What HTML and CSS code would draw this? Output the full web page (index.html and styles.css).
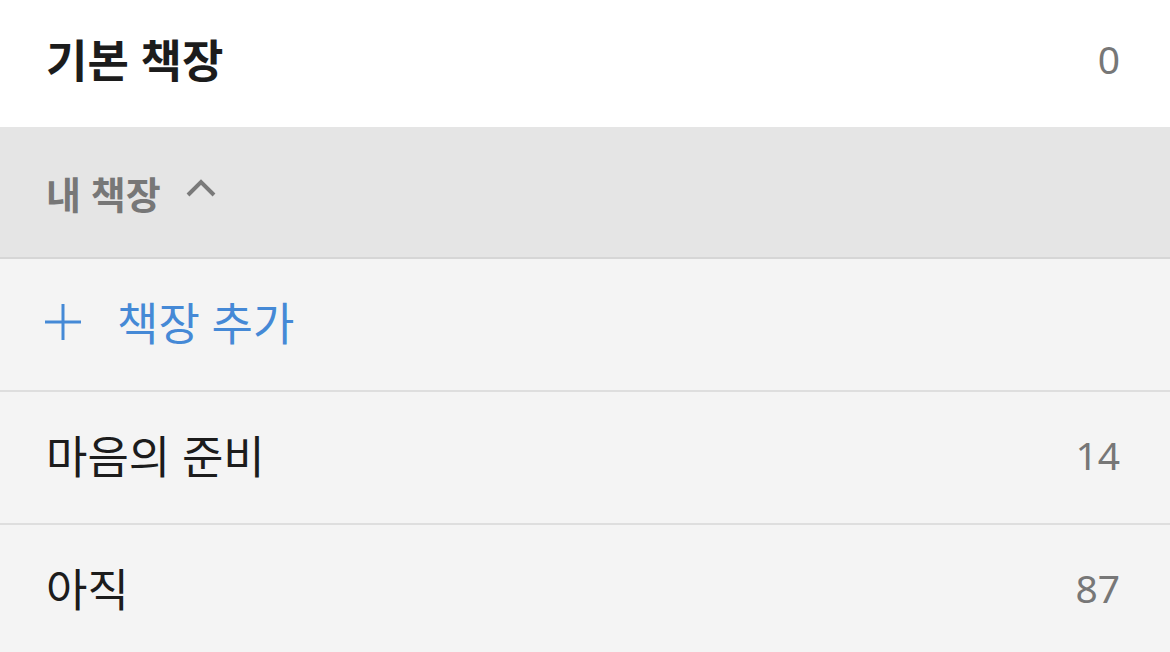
FILE: index.html
```html
<!DOCTYPE html>
<html lang="ko">
<head>
  <meta charset="UTF-8">
  <meta name="viewport" content="width=device-width, initial-scale=1.0">
  <title>책장</title>
  <link rel="stylesheet" href="styles.css">
</head>
<body>
  <div class="shelves">
    <div class="row row-default">
      <span class="title">기본 책장</span>
      <span class="count">0</span>
    </div>

    <div class="section-head">
      <span>내 책장</span>
      <svg class="chevron" width="32" height="20" viewBox="0 0 32 20">
        <path d="M3 17 L16 4 L29 17" fill="none" stroke="#7a7a7a" stroke-width="4"/>
      </svg>
    </div>

    <div class="row row-add">
      <svg class="plus" width="36" height="36" viewBox="0 0 36 36">
        <path d="M18 0 V36 M0 18 H36" stroke="#4589d6" stroke-width="3"/>
      </svg>
      <span class="add-label">책장 추가</span>
    </div>

    <div class="row">
      <span class="name">마음의 준비</span>
      <span class="count">14</span>
    </div>

    <div class="row">
      <span class="name">아직</span>
      <span class="count">87</span>
    </div>
  </div>
</body>
</html>
```

FILE: styles.css
```css
body {
  margin: 0;
  font-family: "Noto Sans", "Noto Sans CJK KR", sans-serif;
  background-color: #f4f4f4;
  color: #1c1c1c;
}
.shelves {
  width: 1170px;
  height: 652px;
  overflow: hidden;
}
.row {
  display: flex;
  align-items: center;
  justify-content: space-between;
  box-sizing: border-box;
  height: 133px;
  padding: 0 50px 6px 46px;
  border-bottom: 2px solid #dedede;
  background-color: #f4f4f4;
}
.row-default {
  height: 127px;
  padding-bottom: 10px;
  border-bottom: none;
  background-color: #ffffff;
}
.title {
  font-size: 45px;
  font-weight: 700;
}
.name {
  font-size: 45px;
}
.count {
  font-size: 39px;
  color: #777777;
}
.section-head {
  display: flex;
  align-items: center;
  gap: 24px;
  box-sizing: border-box;
  height: 132px;
  padding-left: 46px;
  background-color: #e5e5e5;
  border-bottom: 2px solid #d6d6d6;
  color: #777777;
  font-size: 38px;
  font-weight: 700;
}
.chevron {
  margin-top: -8px;
}
.row-add {
  justify-content: flex-start;
  gap: 36px;
}
.plus {
  margin-left: -1px;
}
.add-label {
  font-size: 45px;
  color: #4589d6;
}
```
